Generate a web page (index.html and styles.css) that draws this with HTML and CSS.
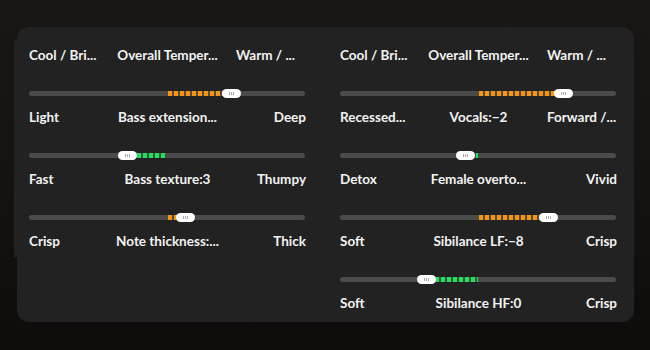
FILE: index.html
```html
<!DOCTYPE html>
<html lang="en">
<head>
    <meta charset="UTF-8">
    <title>Sound tuning</title>
    <link rel="stylesheet" href="styles.css">
</head>
<body>
    <div class="panel">
        <div class="col col-left">
            <div class="labels">
                <span class="lo">Cool / Bri...</span>
                <span class="mid">Overall Temper...</span>
                <span class="hi clip">Warm / ...</span>
            </div>
            <div class="slider">
                <div class="track">
                    <div class="fill orange" style="left:139px;width:56px"></div>
                    <div class="thumb" style="left:193px"></div>
                </div>
                <div class="labels">
                    <span class="lo">Light</span>
                    <span class="mid">Bass extension...</span>
                    <span class="hi">Deep</span>
                </div>
            </div>
            <div class="slider">
                <div class="track">
                    <div class="fill green" style="left:108px;width:30px"></div>
                    <div class="thumb" style="left:89px"></div>
                </div>
                <div class="labels">
                    <span class="lo">Fast</span>
                    <span class="mid">Bass texture:3</span>
                    <span class="hi">Thumpy</span>
                </div>
            </div>
            <div class="slider">
                <div class="track">
                    <div class="fill orange" style="left:139px;width:10px"></div>
                    <div class="thumb" style="left:147px"></div>
                </div>
                <div class="labels">
                    <span class="lo">Crisp</span>
                    <span class="mid">Note thickness:...</span>
                    <span class="hi">Thick</span>
                </div>
            </div>
        </div>

        <div class="col">
            <div class="labels">
                <span class="lo">Cool / Bri...</span>
                <span class="mid">Overall Temper...</span>
                <span class="hi clip">Warm / ...</span>
            </div>
            <div class="slider">
                <div class="track">
                    <div class="fill orange" style="left:139px;width:77px"></div>
                    <div class="thumb" style="left:214px"></div>
                </div>
                <div class="labels">
                    <span class="lo">Recessed...</span>
                    <span class="mid">Vocals:&minus;2</span>
                    <span class="hi clip">Forward /...</span>
                </div>
            </div>
            <div class="slider">
                <div class="track">
                    <div class="fill green" style="left:130px;width:8px"></div>
                    <div class="thumb" style="left:116px"></div>
                </div>
                <div class="labels">
                    <span class="lo">Detox</span>
                    <span class="mid">Female overto...</span>
                    <span class="hi">Vivid</span>
                </div>
            </div>
            <div class="slider">
                <div class="track">
                    <div class="fill orange" style="left:139px;width:62px"></div>
                    <div class="thumb" style="left:199px"></div>
                </div>
                <div class="labels">
                    <span class="lo">Soft</span>
                    <span class="mid">Sibilance LF:&minus;8</span>
                    <span class="hi">Crisp</span>
                </div>
            </div>
            <div class="slider">
                <div class="track">
                    <div class="fill green" style="left:95px;width:43px"></div>
                    <div class="thumb" style="left:77px"></div>
                </div>
                <div class="labels">
                    <span class="lo">Soft</span>
                    <span class="mid">Sibilance HF:0</span>
                    <span class="hi">Crisp</span>
                </div>
            </div>
        </div>
    </div>
</body>
</html>
```

FILE: styles.css
```css
html, body {
    height: 100%;
}

body {
    margin: 0;
    padding: 27px 16px 0 17px;
    box-sizing: border-box;
    font-family: 'Lato', 'Liberation Sans', sans-serif;
    background: linear-gradient(180deg, #1a1614 0%, #141110 60%, #0e0c0b 100%);
    color: #f2f2f2;
}

.panel {
    display: grid;
    grid-template-columns: 277px 277px;
    column-gap: 34px;
    align-items: start;
    width: 617px;
    box-sizing: border-box;
    padding: 13px 17px 9px 12px;
    background-color: #222222;
    border-radius: 12px;
}

.col {
    padding-top: 5px;
}

.col-left {
    margin-left: -15px;
    padding: 5px 0 6px 15px;
    background-color: #222222;
}

.labels {
    display: grid;
    grid-template-columns: 70px 1fr 70px;
    height: 20px;
    line-height: 20px;
    font-size: 13.5px;
    font-weight: bold;
    white-space: nowrap;
}

.labels .lo {
    justify-self: start;
}

.labels .mid {
    justify-self: center;
}

.labels .hi {
    text-align: right;
}

.labels .clip {
    text-align: left;
}

.slider {
    padding-top: 26px;
}

.track {
    position: relative;
    height: 5px;
    margin-bottom: 11px;
    margin-right: 1px;
    background-color: #4b4b4b;
    border-radius: 3px;
}

.fill {
    position: absolute;
    top: 0;
    height: 5px;
}

.orange {
    background: repeating-linear-gradient(90deg, #f7930f 0 4px, transparent 4px 6px);
}

.green {
    background: repeating-linear-gradient(90deg, #1ee35a 0 4px, transparent 4px 6px);
}

.thumb {
    position: absolute;
    top: -2px;
    width: 19px;
    height: 9px;
    background-color: #ffffff;
    border-radius: 5px;
}

.thumb::after {
    content: '';
    position: absolute;
    left: 7px;
    top: 3px;
    width: 5px;
    height: 3px;
    background: repeating-linear-gradient(90deg, #a8a8a8 0 1px, transparent 1px 2px);
}
```
